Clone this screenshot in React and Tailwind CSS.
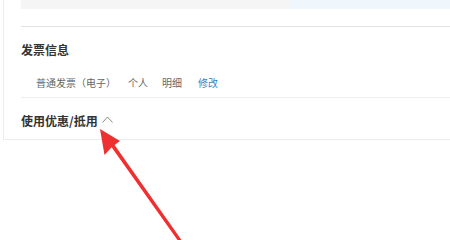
const CJK = { fontFamily: '"Noto Sans CJK SC", "Noto Sans", sans-serif' };

function Arrow() {
  return (
    <svg className="absolute left-0 top-0 pointer-events-none" width="450" height="240" viewBox="0 0 450 240">
      <polygon
        fill="#ee3030"
        points="100,129 120,141 114.6,145 181.5,240 177.5,240 111.6,147.2 104.5,155"
      />
    </svg>
  );
}

export default function App() {
  return (
    <div className="relative w-[450px] h-[240px] bg-white overflow-hidden" style={CJK}>
      <div className="ml-[3px] border-l border-b border-[#ececec] h-[140px]">
        {/* previous block, cut off at top */}
        <div className="ml-[17px] flex h-[9px]">
          <div className="w-[268px] bg-[#f5f5f5]" />
          <div className="flex-1 bg-[#eff7fd]" />
        </div>
        <div className="ml-[17px] mt-[17px] border-t border-[#e2e2e2]" />

        <div className="ml-[17px] h-[71px] border-b border-[#eeeeee]">
          <div className="pt-[15px] text-[12px] leading-[16px] font-bold text-[#333]">发票信息</div>
          <div className="mt-[17px] ml-[15px] flex text-[10px] leading-[16px] text-[#666]">
            <span>普通发票（电子）</span>
            <span className="ml-[12px]">个人</span>
            <span className="ml-[14px]">明细</span>
            <span className="ml-[16px] text-[#3d7fc4]">修改</span>
          </div>
        </div>

        <div className="ml-[17px] pt-[15px] flex items-center">
          <span className="text-[12px] leading-[16px] font-bold text-[#333]">使用优惠/抵用</span>
          <svg className="ml-[4px] -mt-[3px]" width="11" height="7" viewBox="0 0 11 7">
            <polyline points="0.5,6.5 5.5,1 10.5,6.5" fill="none" stroke="#888" strokeWidth="1" />
          </svg>
        </div>
      </div>
      <Arrow />
    </div>
  );
}
